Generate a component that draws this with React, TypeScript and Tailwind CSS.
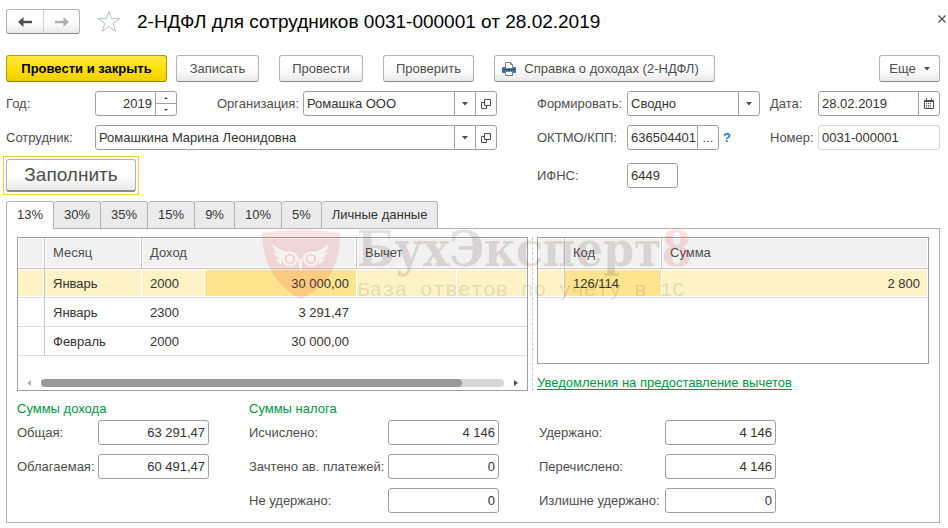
import type { ReactNode } from 'react';

const font = "font-['Liberation_Sans',Arial,sans-serif]";
const btn =
  'flex h-[27px] items-center justify-center rounded-[3px] border border-[#b3b3b3] border-b-[#8c8c8c] bg-linear-to-b from-white from-50% to-[#e9e9e9] text-[#4d4d4d]';
const box = 'flex h-[25px] min-w-0 overflow-hidden rounded-[3px] border border-[#a0a0a0] bg-white';
const inputCls = 'w-full min-w-0 flex-1 bg-transparent px-[3px] text-[#333] outline-none';
const side = 'flex w-[21px] shrink-0 items-center justify-center border-l border-[#a0a0a0] text-[#4d4d4d]';

const Caret = () => (
  <svg width="6" height="4" viewBox="0 0 6 4" fill="#4d4d4d">
    <path d="M0 0h6L3 3.5z" />
  </svg>
);

const OpenIcon = () => (
  <svg width="10" height="10" viewBox="0 0 10 10" fill="none" stroke="#4d4d4d">
    <path d="M3.5 .5h6v6h-6zM3.5 3.5h-3v6h5v-3" />
  </svg>
);

const CalendarIcon = () => (
  <svg width="10" height="11" viewBox="0 0 10 11" fill="none" stroke="#4d4d4d">
    <path d="M.5 2.5h9v8h-9zM1 3.5h8M2.5 0v3M7.5 0v3" />
    <path d="M2 5.5h6M2 7.5h6" strokeDasharray="1 1" />
    <path d="M2 9h6" strokeDasharray="1 1" />
  </svg>
);

const PrinterIcon = () => (
  <svg width="14" height="14" viewBox="0 0 14 14" fill="none" className="shrink-0">
    <rect x="0" y="5" width="14" height="6" rx="1" fill="#41719c" />
    <path d="M3.5 6.5v-6h5l2 2v4z" fill="#fff" stroke="#6d8398" />
    <path d="M8.5 .5v2h2" stroke="#6d8398" />
    <path d="M1 7.5h12" stroke="#2b5378" />
    <path d="M3.5 9.500h7v4h-7z" fill="#fff" stroke="#6d8398" />
  </svg>
);

const Arrow = ({ flip, color }: { flip?: boolean; color: string }) => (
  <svg width="14" height="10" viewBox="0 0 14 10" className={flip ? 'rotate-180' : ''}>
    <path d="M0 5l5.500-5v3.800H14v2.400H5.500V10z" fill={color} />
  </svg>
);

const Watermark = () => (
  <div className="pointer-events-none absolute top-0 left-[254px] flex gap-4" aria-hidden="true">
    <svg width="80" height="72" viewBox="0 0 80 72">
      <path d="M1 4Q40-3 79 4Q80 52 39.500 70Q2 50 1 4z" fill="#e03030" fillOpacity=".14" />
      <g fill="none" stroke="#fff" strokeOpacity=".65" strokeWidth="2.200">
        <circle cx="29" cy="30" r="6.500" />
        <circle cx="50" cy="30" r="6.500" />
      </g>
      <g fill="#fff" fillOpacity=".65">
        <circle cx="29" cy="30" r="3.200" />
        <circle cx="50" cy="30" r="3.200" />
        <path d="M11 15q8 7 18 8q8 1 10.500 9q2.500-8 10.500-9q10-1 18-8q-2 7-6 10l5-2q-3 6-7 7l4 0q-3 5-6 5q1-12-9-11q-8 1-8 13l-1.500 6l-1.500-6q0-12-8-13q-10-1-9 11q-3 0-6-5h4q-4-1-7-7l5 2q-4-3-6-10z" />
      </g>
    </svg>
    <div className="whitespace-nowrap text-[#4b3228]/15">
      <div className="font-['DejaVu_Serif_Condensed','DejaVu_Serif',serif] text-[49px] leading-[40px] font-bold">
        БухЭксперт<span className="text-[#e03030]/15">8</span>
      </div>
      <div className="mt-2 font-['Liberation_Mono',monospace] text-[21px] leading-[28px]">
        База ответов по учёту в 1С
      </div>
    </div>
  </div>
);

const Label = ({ id, className, children }: { id: string; className?: string; children: ReactNode }) => (
  <label htmlFor={id} className={`shrink-0 whitespace-nowrap text-[#4d4d4d] ${className ?? ''}`}>
    {children}
  </label>
);

const Amount = ({ id, label, value, width }: { id: string; label: string; value: string; width: string }) => (
  <div className="flex items-center">
    <Label id={id} className={width}>{label}</Label>
    <div className={`${box} w-[111px]`}>
      <input id={id} defaultValue={value} className={`${inputCls} text-right`} />
    </div>
  </div>
);

const tabs = ['13%', '30%', '35%', '15%', '9%', '10%', '5%', 'Личные данные'];

const incomes = [
  { month: 'Январь', code: '2000', sum: '30 000,00' },
  { month: 'Январь', code: '2300', sum: '3 291,47' },
  { month: 'Февраль', code: '2000', sum: '30 000,00' },
];

const th = 'h-[31px] border-b border-[#c6c6c6] bg-[#f1f1f1] px-2 text-left font-normal text-[#4d4d4d] shadow-[inset_0_0_0_1px_#fff]';
const td = 'h-[29px] border-b border-[#e0e0e0] px-2 pt-px';
const tdActive = `${td} bg-[#fdf2c6] shadow-[inset_-1px_0_0_#fff,inset_0_1px_0_#fff,inset_0_-1px_0_#fff]`;

const Header = () => (
  <header className="flex h-[43px] items-center pl-[6px]">
    <div className="flex h-[25px] overflow-hidden rounded-[3px] border border-[#b3b3b3] border-b-[#8c8c8c] bg-linear-to-b from-white from-50% to-[#e9e9e9]">
      <button aria-label="Назад" className="flex w-[36px] items-center justify-center">
        <Arrow color="#4d4d4d" />
      </button>
      <button aria-label="Вперед" className="flex w-[36px] items-center justify-center border-l border-[#d0d0d0]">
        <Arrow flip color="#b0b0b0" />
      </button>
    </div>
    <button aria-label="В избранное" className="ml-[17px]">
      <svg width="24" height="23" viewBox="0 0 24 23" fill="none" stroke="#b4bac2">
        <path d="M12 1.500l2.700 7.200h8l-6.400 4.700 2.400 7.900L12 16.600l-6.700 4.700 2.400-7.900L1.300 8.700h8z" />
      </svg>
    </button>
    <h1 className="ml-4 flex-1 text-[19px] leading-[24px] text-black">
      2-НДФЛ для сотрудников 0031-000001 от 28.02.2019
    </h1>
    <button aria-label="Закрыть" className="mr-[1px] mb-[6px] p-px">
      <svg width="8" height="8" viewBox="0 0 8 8" stroke="#4d4d4d" strokeWidth="1.200">
        <path d="M.5 .5l7 7M7.500 .5l-7 7" />
      </svg>
    </button>
  </header>
);

const Toolbar = () => (
  <div className="mt-3 flex items-center pr-2 pl-[6px]">
    <button className="flex h-[27px] w-[161px] items-center justify-center rounded-[3px] border border-[#b39e00] border-b-[#8c7b00] bg-linear-to-b from-[#ffe83b] via-[#ffe000] to-[#efcf00] font-bold text-black">
      Провести и закрыть
    </button>
    <button className={`${btn} ml-[9px] w-[83px]`}>Записать</button>
    <button className={`${btn} ml-5 w-[84px]`}>Провести</button>
    <button className={`${btn} ml-5 w-[91px]`}>Проверить</button>
    <button className={`${btn} ml-5 w-[221px] gap-2 pr-2`}>
      <PrinterIcon />
      Справка о доходах (2-НДФЛ)
    </button>
    <button className={`${btn} ml-auto w-[61px] gap-2`}>
      Еще <Caret />
    </button>
  </div>
);

const DocFields = () => (
  <div className="mt-[9px] flex gap-10 pr-2 pl-[6px]">
    <div className="flex min-w-0 flex-1 flex-col gap-[9px]">
      <div className="flex items-center">
        <Label id="year" className="w-[89px]">Год:</Label>
        <div className={`${box} w-[82px] shrink-0`}>
          <input id="year" defaultValue="2019" className={`${inputCls} text-right`} />
          <div className="flex w-[21px] flex-col border-l border-[#a0a0a0]">
            <button aria-label="Больше" className="flex flex-1 items-center justify-center border-b border-[#a0a0a0]">
              <svg width="4" height="2" viewBox="0 0 4 2"><path d="M0 2h4L2 0z" fill="#4d4d4d" /></svg>
            </button>
            <button aria-label="Меньше" className="flex flex-1 items-center justify-center">
              <svg width="4" height="2" viewBox="0 0 4 2"><path d="M0 0h4L2 2z" fill="#4d4d4d" /></svg>
            </button>
          </div>
        </div>
        <Label id="org" className="ml-10 w-[86px]">Организация:</Label>
        <div className={`${box} flex-1`}>
          <input id="org" defaultValue="Ромашка ООО" className={inputCls} />
          <button aria-label="Выбрать организацию" className={side}><Caret /></button>
          <button aria-label="Открыть организацию" className={side}><OpenIcon /></button>
        </div>
      </div>
      <div className="flex items-center">
        <Label id="employee" className="w-[89px]">Сотрудник:</Label>
        <div className={`${box} flex-1`}>
          <input id="employee" defaultValue="Ромашкина Марина Леонидовна" className={inputCls} />
          <button aria-label="Выбрать сотрудника" className={side}><Caret /></button>
          <button aria-label="Открыть сотрудника" className={side}><OpenIcon /></button>
        </div>
      </div>
      <div className="-mt-[3px] -ml-[3px] self-start border border-[#ffcc33] p-[2px]">
        <button className="flex h-[33px] w-[130px] items-center justify-center rounded-[3px] border border-[#b3b3b3] border-b-2 border-b-[#8c8c8c] bg-linear-to-b from-white from-50% to-[#e9e9e9] text-[19px] text-[#4d4d4d]">
          Заполнить
        </button>
      </div>
    </div>

    <div className="flex w-[403px] shrink-0 flex-col gap-[9px]">
      <div className="flex items-center">
        <Label id="mode" className="w-[90px]">Формировать:</Label>
        <div className={`${box} w-[133px]`}>
          <select id="mode" className="w-full appearance-none bg-transparent px-[3px] text-[#333] outline-none">
            <option>Сводно</option>
          </select>
          <span className={`${side} pointer-events-none`}><Caret /></span>
        </div>
        <Label id="date" className="ml-[10px] w-[48px]">Дата:</Label>
        <div className={`${box} flex-1`}>
          <input id="date" defaultValue="28.02.2019" className={inputCls} />
          <button aria-label="Календарь" className={side}><CalendarIcon /></button>
        </div>
      </div>
      <div className="flex items-center">
        <Label id="oktmo" className="w-[90px]">ОКТМО/КПП:</Label>
        <div className={`${box} w-[92px] shrink-0`}>
          <input
            id="oktmo"
            defaultValue="636504401"
            className="w-full min-w-0 flex-1 bg-transparent pl-[3px] text-[#333] outline-none"
          />
          <button aria-label="Выбрать ОКТМО" className={side}>...</button>
        </div>
        <button aria-label="Справка" className="ml-1 w-2 font-bold text-[#1a7fc4]">?</button>
        <Label id="number" className="ml-[39px] w-[48px]">Номер:</Label>
        <div className="flex h-[25px] min-w-0 flex-1 rounded-[3px] border border-[#d6d6d6]">
          <input id="number" defaultValue="0031-000001" className={inputCls} />
        </div>
      </div>
      <div className="mt-1 flex items-center">
        <Label id="ifns" className="w-[90px]">ИФНС:</Label>
        <div className={`${box} w-[51px]`}>
          <input id="ifns" defaultValue="6449" className={inputCls} />
        </div>
      </div>
    </div>
  </div>
);

const IncomeTable = () => (
  <div className="flex h-[154px] min-w-0 flex-1 flex-col border border-[#a0a0a0] bg-white">
    <table className="w-full table-fixed border-separate border-spacing-0 text-[#333]">
      <colgroup>
        <col className="w-[27px]" />
        <col className="w-[97px]" />
        <col className="w-[63px]" />
        <col className="w-[152px]" />
        <col className="w-[100px]" />
        <col />
      </colgroup>
      <thead>
        <tr>
          <th className={`${th} border-r`}></th>
          <th className={`${th} border-r`}>Месяц</th>
          <th colSpan={2} className={`${th} border-r`}>Доход</th>
          <th colSpan={2} className={th}>Вычет</th>
        </tr>
      </thead>
      <tbody>
        {incomes.map((row, i) => {
          const cell = i === 0 ? tdActive : td;
          return (
            <tr key={i}>
              <td className={`${cell} border-r border-r-[#c6c6c6]`}></td>
              <td className={cell}>{row.month}</td>
              <td className={cell}>{row.code}</td>
              <td className={i === 0 ? `${cell} bg-[#ffe48f]! text-right` : `${cell} text-right`}>{row.sum}</td>
              <td className={cell}></td>
              <td className={cell}></td>
            </tr>
          );
        })}
      </tbody>
    </table>
    <div className="mt-auto mb-[3px] flex items-center px-[9px]">
      <svg width="4" height="6" viewBox="0 0 4 6"><path d="M4 0v6L0 3z" fill="#b0b0b0" /></svg>
      <div className="mx-[10px] h-2 flex-1 rounded-full bg-[#d6d6d6]">
        <div className="h-2 w-[91%] rounded-full bg-[#999]"></div>
      </div>
      <svg width="4" height="6" viewBox="0 0 4 6"><path d="M0 0v6l4-3z" fill="#4d4d4d" /></svg>
    </div>
  </div>
);

const DeductionTable = () => (
  <div className="w-[392px] shrink-0">
    <div className="h-[127px] border border-[#a0a0a0] bg-white">
      <table className="w-full table-fixed border-separate border-spacing-0 text-[#333]">
        <colgroup>
          <col className="w-[27px]" />
          <col className="w-[97px]" />
          <col />
        </colgroup>
        <thead>
          <tr>
            <th className={`${th} border-r`}></th>
            <th className={`${th} border-r`}>Код</th>
            <th className={th}>Сумма</th>
          </tr>
        </thead>
        <tbody>
          <tr>
            <td className={`${tdActive} border-r border-r-[#c6c6c6]`}></td>
            <td className={`${tdActive} bg-[#ffe48f]!`}>126/114</td>
            <td className={`${tdActive} text-right`}>2 800</td>
          </tr>
        </tbody>
      </table>
    </div>
    <a href="#notices" className="mt-3 inline-block border-b border-[#009646] leading-[13px] text-[#009646]">
      Уведомления на предоставление вычетов
    </a>
  </div>
);

const Totals = () => (
  <div className="mt-[9px] flex">
    <section className="w-[232px] shrink-0">
      <h2 className="leading-[17px] text-[#009646]">Суммы дохода</h2>
      <div className="mt-[3px] flex flex-col gap-[9px]">
        <Amount id="total" label="Общая:" value="63 291,47" width="w-[81px]" />
        <Amount id="taxable" label="Облагаемая:" value="60 491,47" width="w-[81px]" />
      </div>
    </section>
    <section>
      <h2 className="leading-[17px] text-[#009646]">Суммы налога</h2>
      <div className="mt-[3px] flex gap-10">
        <div className="flex flex-col gap-[9px]">
          <Amount id="calculated" label="Исчислено:" value="4 146" width="w-[139px]" />
          <Amount id="advance" label="Зачтено ав. платежей:" value="0" width="w-[139px]" />
          <Amount id="unheld" label="Не удержано:" value="0" width="w-[139px]" />
        </div>
        <div className="flex flex-col gap-[9px]">
          <Amount id="held" label="Удержано:" value="4 146" width="w-[126px]" />
          <Amount id="transferred" label="Перечислено:" value="4 146" width="w-[126px]" />
          <Amount id="excess" label="Излишне удержано:" value="0" width="w-[126px]" />
        </div>
      </div>
    </section>
  </div>
);

const App = () => {
  return (
    <div className={`bg-white pb-[5px] text-[13px] leading-[16px] ${font}`}>
      <Header />
      <Toolbar />
      <DocFields />
      <div className="mt-[6px] mr-2 ml-[6px]">
        <div role="tablist" className="flex">
          {tabs.map((tab, i) => (
            <button
              key={tab}
              role="tab"
              aria-selected={i === 0}
              className={
                i === 0
                  ? 'relative z-10 -mb-px h-7 rounded-t-[3px] border border-b-0 border-[#b3b3b3] bg-white px-[10px] pb-px text-[#333]'
                  : 'h-[27px] rounded-t-[3px] border border-b-0 border-l-0 border-[#b3b3b3] bg-[#ebebeb] px-[10px] text-[#333]'
              }
            >
              {tab}
            </button>
          ))}
        </div>
        <div className="relative border border-[#b3b3b3] px-[10px] pt-2 pb-[9px]">
          <div className="flex">
            <IncomeTable />
            <div className="mx-1 border-l border-dashed border-[#ccc]"></div>
            <DeductionTable />
          </div>
          <Totals />
          <Watermark />
        </div>
      </div>
    </div>
  );
};

export default App;
